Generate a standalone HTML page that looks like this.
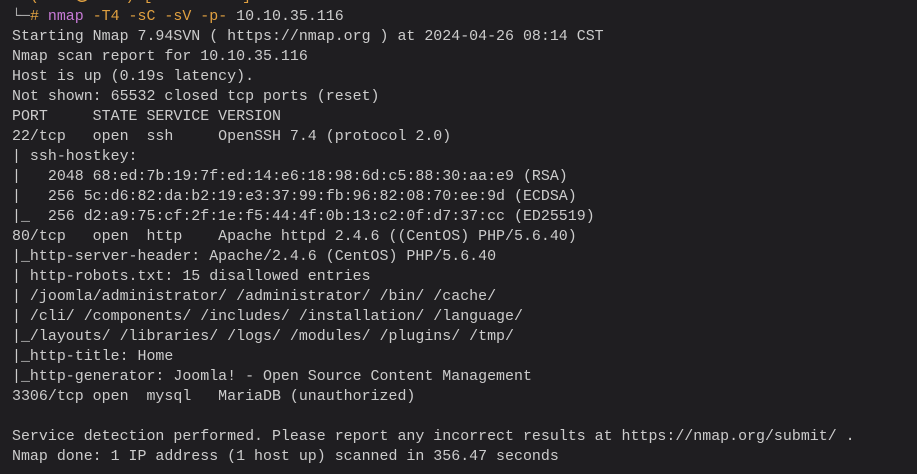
<!DOCTYPE html>
<html><head><meta charset="utf-8"><style>
html,body{margin:0;padding:0;background:#1f1e21;width:917px;height:474px;overflow:hidden}
pre{margin:0;position:absolute;left:12px;top:-13px;font-family:"Liberation Mono","DejaVu Sans Mono",monospace;font-size:14.95px;line-height:20px;color:#cccccc;white-space:pre}
.o{color:#e0a040}.p{color:#c77ad6}.g{color:#aaaaaa}
</style></head><body><pre><span class="o">  (root㉿kali)-[/home/kali]</span>
<span class="g">└─</span><span class="o">#</span> <span class="p">nmap</span> <span class="o">-T4 -sC -sV -p-</span> 10.10.35.116
Starting Nmap 7.94SVN ( https://nmap.org ) at 2024-04-26 08:14 CST
Nmap scan report for 10.10.35.116
Host is up (0.19s latency).
Not shown: 65532 closed tcp ports (reset)
PORT     STATE SERVICE VERSION
22/tcp   open  ssh     OpenSSH 7.4 (protocol 2.0)
| ssh-hostkey:
|   2048 68:ed:7b:19:7f:ed:14:e6:18:98:6d:c5:88:30:aa:e9 (RSA)
|   256 5c:d6:82:da:b2:19:e3:37:99:fb:96:82:08:70:ee:9d (ECDSA)
|_  256 d2:a9:75:cf:2f:1e:f5:44:4f:0b:13:c2:0f:d7:37:cc (ED25519)
80/tcp   open  http    Apache httpd 2.4.6 ((CentOS) PHP/5.6.40)
|_http-server-header: Apache/2.4.6 (CentOS) PHP/5.6.40
| http-robots.txt: 15 disallowed entries
| /joomla/administrator/ /administrator/ /bin/ /cache/
| /cli/ /components/ /includes/ /installation/ /language/
|_/layouts/ /libraries/ /logs/ /modules/ /plugins/ /tmp/
|_http-title: Home
|_http-generator: Joomla! - Open Source Content Management
3306/tcp open  mysql   MariaDB (unauthorized)

Service detection performed. Please report any incorrect results at https://nmap.org/submit/ .
Nmap done: 1 IP address (1 host up) scanned in 356.47 seconds
</pre></body></html>
